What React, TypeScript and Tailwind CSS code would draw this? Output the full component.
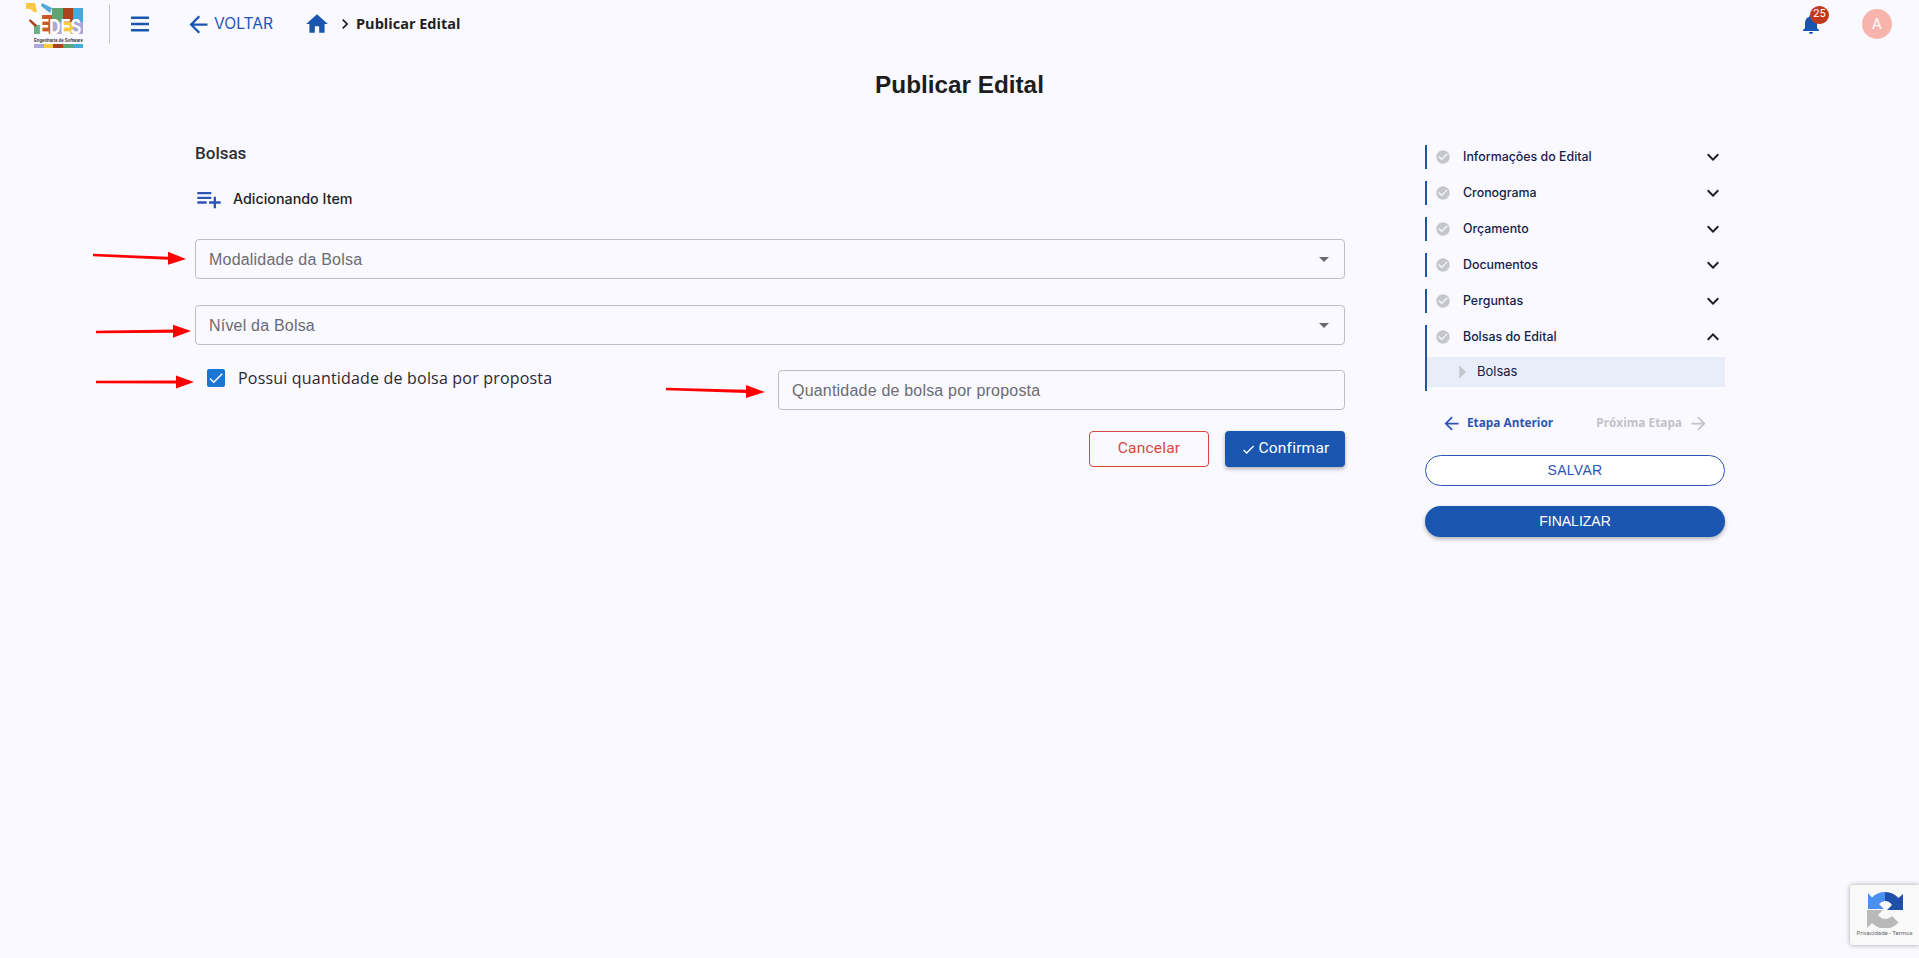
const Icon = ({ d, className }: { d: string; className?: string }) => (
  <svg viewBox="0 0 24 24" fill="currentColor" className={`shrink-0 ${className ?? ""}`}><path d={d} /></svg>
);
const P = {
  back: "M20 11H7.83l5.59-5.59L12 4l-8 8 8 8 1.41-1.41L7.83 13H20v-2z",
  fwd: "M12 4l-1.41 1.41L16.17 11H4v2h12.17l-5.58 5.59L12 20l8-8z",
  menu: "M3 19.5h18V17H3v2.5zm0-6.25h18v-2.5H3v2.5zM3 4.5V7h18V4.5H3z",
  home: "M10 20v-6h4v6h5v-8h3L12 3 2 12h3v8z",
  bell: "M12 22c1.1 0 2-.9 2-2h-4c0 1.1.89 2 2 2zm6-6v-5c0-3.07-1.64-5.64-4.5-6.32V4c0-.83-.67-1.5-1.5-1.5s-1.5.67-1.5 1.5v.68C7.63 5.36 6 7.92 6 11v5l-2 2v1h16v-1l-2-2z",
  add: "M14 10H2v2h12v-2zm0-4H2v2h12V6zm4 8v-4h-2v4h-4v2h4v4h2v-4h4v-2h-4zM2 16h8v-2H2v2z",
  ok: "M12 2C6.48 2 2 6.48 2 12s4.48 10 10 10 10-4.48 10-10S17.52 2 12 2zm-2 15l-5-5 1.41-1.41L10 14.17l7.59-7.59L19 8l-9 9z",
  more: "M16.59 8.59L12 13.17 7.41 8.59 6 10l6 6 6-6z",
  less: "M12 8l-6 6 1.41 1.41L12 10.83l4.59 4.59L18 14z",
  right: "M10 17l5-5-5-5v10z",
  chev: "M10 6L8.59 7.41 13.17 12l-4.58 4.59L10 18l6-6z",
  check: "M9 16.17L4.83 12l-1.41 1.41L9 19 21 7l-1.41-1.41z",
  drop: "M7 10l5 5 5-5z",
};

const Logo = () => (
  <svg viewBox="0 0 58 47" className="w-[58px] h-[47px] shrink-0">
    <path d="M0 2h9l2 9-5 1-1-4H0z" fill="#f6c945" />
    <path d="M16 2l10 5-2 5-9-7z" fill="#4fa8d8" />
    <rect x="26" y="7" width="11" height="14" fill="#5ca575" />
    <rect x="37" y="7" width="10" height="14" fill="#a9421d" />
    <rect x="47" y="7" width="10" height="14" fill="#45a9dc" />
    <rect x="8" y="24" width="8" height="9" fill="#6fae7f" />
    <rect x="16" y="14" width="10" height="19" fill="#c75b2a" />
    <rect x="26" y="21" width="11" height="12" fill="#a9a9d8" />
    <rect x="37" y="21" width="10" height="12" fill="#f6c945" />
    <rect x="47" y="21" width="10" height="12" fill="#a9a9d8" />
    <path d="M3 8l13 8-2 3-12-8z" fill="#fff" />
    <path d="M4 18l7 6-2 2-6-6z" fill="#a9421d" />
    <g transform="translate(13 33) scale(1 1.45)">
      <text x="0" y="0" fontSize="15.5" fontWeight="700" fill="#fff" fontFamily="'Liberation Sans',sans-serif">EDES</text>
    </g>
    <g transform="translate(8 41) scale(1 1.35)">
      <text x="0" y="0" fontSize="4.3" fontWeight="700" fill="#333" fontFamily="'Liberation Sans',sans-serif">Engenharia de Software</text>
    </g>
    <rect x="8" y="43" width="10" height="4" fill="#a9a9d8" />
    <rect x="18" y="43" width="9" height="4" fill="#f6c945" />
    <rect x="27" y="43" width="10" height="4" fill="#a9421d" />
    <rect x="37" y="43" width="10" height="4" fill="#5ca575" />
    <rect x="47" y="43" width="10" height="4" fill="#45a9dc" />
  </svg>
);

const Arrow = ({ x1, y1, x2, y2, b }: { x1: number; y1: number; x2: number; y2: number; b: number }) => {
  const by = y1 + ((y2 - y1) * (b - x1)) / (x2 - x1);
  return (
    <g fill="#ff0000" stroke="none">
      <path d={`M${x1} ${y1 - 1.2}L${b} ${by - 1.6}L${b} ${by + 1.6}L${x1} ${y1 + 1.2}Z`} />
      <path d={`M${b} ${by - 6.5}L${x2} ${y2}L${b} ${by + 6.5}Z`} />
    </g>
  );
};

const Field = ({ label, select, className }: { label: string; select?: boolean; className?: string }) => (
  <div className={`h-10 border border-[#bdbdc4] rounded-[4px] flex items-center justify-between pl-[13px] pr-[8px] text-[16px] tracking-[0.2px] text-[#6c6c72] ${className ?? ""}`}>
    <span className="pt-[1px]">{label}</span>
    {select && <Icon d={P.drop} className="w-6 h-6 text-[#6a6a6e]" />}
  </div>
);

const StepHead = ({ label, open }: { label: string; open?: boolean }) => (
  <div className="h-6 flex items-center pl-[8px]">
    <Icon d={P.ok} className="w-4 h-4 text-[#c6c6ce]" />
    <span className="ml-[12px] pt-[1px] flex-1 text-[12.4px] font-medium text-[#161d4a] font-['Inter',sans-serif]">{label}</span>
    <Icon d={open ? P.less : P.more} className="w-6 h-6 text-[#1f1f24]" />
  </div>
);

const Step = ({ label }: { label: string }) => (
  <div className="border-l-2 border-[#1a56b0]"><StepHead label={label} /></div>
);

export default function App() {
  return (
    <div className="relative w-[1919px] h-[958px] overflow-hidden bg-[#f9f9ff] font-['Liberation_Sans',sans-serif]">
      <header className="h-[48px] flex items-center pl-[26px] pr-[27px]">
        <Logo />
        <div className="ml-[25px] w-[1px] h-[40px] bg-[#c9c9cc]" />
        <Icon d={P.menu} className="ml-[18px] w-6 h-6 text-[#1a56b0]" />
        <Icon d={P.back} className="ml-[33px] w-[27px] h-[27px] text-[#1a56b0]" />
        <span className="ml-[2px] text-[15.6px] text-[#1f55bb] font-['Inter',sans-serif]">VOLTAR</span>
        <Icon d={P.home} className="ml-[31px] w-[26px] h-[26px] text-[#1a56b0]" />
        <Icon d={P.chev} className="ml-[5px] w-5 h-5 text-[#1f1f24]" />
        <span className="ml-[1px] text-[14.5px] font-bold text-[#1f1f24] font-['Open_Sans',sans-serif]">Publicar Edital</span>
        <div className="ml-auto relative w-6 h-6 mr-[39px] mt-[-1px]">
          <Icon d={P.bell} className="w-6 h-6 text-[#1a56b0]" />
          <span className="absolute left-[11px] top-[-6px] w-[19px] h-[18px] rounded-full bg-[#c13a20] text-white text-[11px] flex items-center justify-center font-['Roboto',sans-serif]">25</span>
        </div>
        <div className="w-[30px] h-[30px] rounded-full bg-[#f7b4ac] text-white text-[15px] flex items-center justify-center font-['Roboto',sans-serif]">A</div>
      </header>

      <h1 className="mt-[22px] h-[30px] leading-[30px] text-center text-[24.3px] font-bold text-[#1d1d20]">Publicar Edital</h1>

      <main className="mt-[41px] flex pl-[195px] gap-[80px]">
        <section className="w-[1150px]">
          <h2 className="h-6 leading-6 text-[17px] font-medium text-[#2e2e33] font-['Roboto',sans-serif]">Bolsas</h2>
          <div className="mt-[22px] h-6 flex items-center">
            <Icon d={P.add} className="w-[28px] h-[28px] text-[#2d55b5]" />
            <span className="ml-[10px] text-[14.3px] font-medium text-[#1f1f24] font-['Inter',sans-serif]">Adicionando Item</span>
          </div>
          <Field label="Modalidade da Bolsa" select className="mt-[28px]" />
          <Field label="Nível da Bolsa" select className="mt-[26px]" />
          <div className="mt-[25px] flex">
            <div className="w-[583px] flex items-center h-[24px] pl-[12px] mt-[-4px]">
              <span className="w-[18px] h-[18px] rounded-[2px] bg-[#1976d2] flex items-center justify-center">
                <Icon d={P.check} className="w-[18px] h-[18px] text-white" />
              </span>
              <span className="ml-[13px] text-[16px] tracking-[0.19px] text-[#2a2a2e] font-['Open_Sans',sans-serif]">Possui quantidade de bolsa por proposta</span>
            </div>
            <Field label="Quantidade de bolsa por proposta" className="flex-1" />
          </div>
          <div className="mt-[21px] flex justify-end gap-4 font-['Roboto',sans-serif] text-[15.5px] tracking-[0.2px]">
            <button className="w-[120px] h-[36px] rounded-[4px] border border-[#d9473b] text-[#d9473b]">Cancelar</button>
            <button className="w-[120px] h-[36px] rounded-[4px] bg-[#1a56b0] text-white flex items-center justify-center gap-[3px] shadow-[0_2px_4px_rgba(0,0,0,0.3)]">
              <Icon d={P.check} className="w-[15px] h-[15px]" />
              Confirmar
            </button>
          </div>
        </section>

        <aside className="w-[300px] mt-[4px]">
          <div className="flex flex-col gap-3">
            <Step label="Informações do Edital" />
            <Step label="Cronograma" />
            <Step label="Orçamento" />
            <Step label="Documentos" />
            <Step label="Perguntas" />
            <div className="border-l-2 border-[#1a56b0] h-[66px]">
              <StepHead label="Bolsas do Edital" open />
              <div className="mt-[8px] h-[30px] bg-[#e9edfa] flex items-center pl-[19px]">
                <Icon d={P.right} className="w-8 h-8 text-[#c6c6ce]" />
                <span className="ml-[-1px] text-[13px] text-[#161d4a] font-['Inter',sans-serif]">Bolsas</span>
              </div>
            </div>
          </div>
          <div className="mt-[20px] h-[24px] flex items-center justify-between pl-[16px] pr-[16px] text-[11.8px] font-bold font-['Open_Sans',sans-serif]">
            <div className="flex items-center gap-[5px] text-[#2d55b5]">
              <Icon d={P.back} className="w-[21px] h-[21px]" />
              Etapa Anterior
            </div>
            <div className="flex items-center gap-[6px] text-[#c2c2ca]">
              Próxima Etapa
              <Icon d={P.fwd} className="w-[21px] h-[21px]" />
            </div>
          </div>
          <button className="mt-[20px] block w-full h-[31px] rounded-full border border-[#2d55b5] bg-white text-[14px] tracking-[0.3px] text-[#2d55b5]">SALVAR</button>
          <button className="mt-[20px] block w-full h-[31px] rounded-full bg-[#1a56b0] text-[14px] text-white shadow-[0_2px_4px_rgba(0,0,0,0.3)]">FINALIZAR</button>
        </aside>
      </main>

      <svg className="absolute inset-0 w-[1919px] h-[958px] pointer-events-none">
        <Arrow x1={93} y1={255} x2={186} y2={259} b={168} />
        <Arrow x1={96} y1={332} x2={191} y2={331} b={173} />
        <Arrow x1={96} y1={382} x2={194} y2={382} b={176} />
        <Arrow x1={666} y1={389} x2={765} y2={392} b={746} />
      </svg>

      <div className="absolute left-[1850px] top-[885px] w-[69px] h-[60px] bg-[#f9f9f9] rounded-l-[3px] shadow-[0_0_5px_rgba(0,0,0,0.35)] flex flex-col items-center">
        <svg viewBox="0 0 36 36" className="w-[36px] h-[36px] mt-[7px] shrink-0 ml-[1px]">
          <path d="M18 0a18 18 0 0 0-13 5.5L1 1v16h16l-5-5A9 9 0 0 1 18 9z" fill="#4a90f0" />
          <path d="M18 0a18 18 0 0 1 13.5 6L36 2v16H20l5-5A9 9 0 0 0 18 9z" fill="#1f4fa8" />
          <path d="M0 18h16l-5 5a9 9 0 0 0 14 1l6.5 6.5A18 18 0 0 1 5 31l-5 5z" fill="#b9b9b9" />
        </svg>
        <span className="mt-[1px] text-[6px] leading-[8px] text-[#666] whitespace-nowrap font-['Roboto',sans-serif]">Privacidade - Termos</span>
      </div>
    </div>
  );
}
